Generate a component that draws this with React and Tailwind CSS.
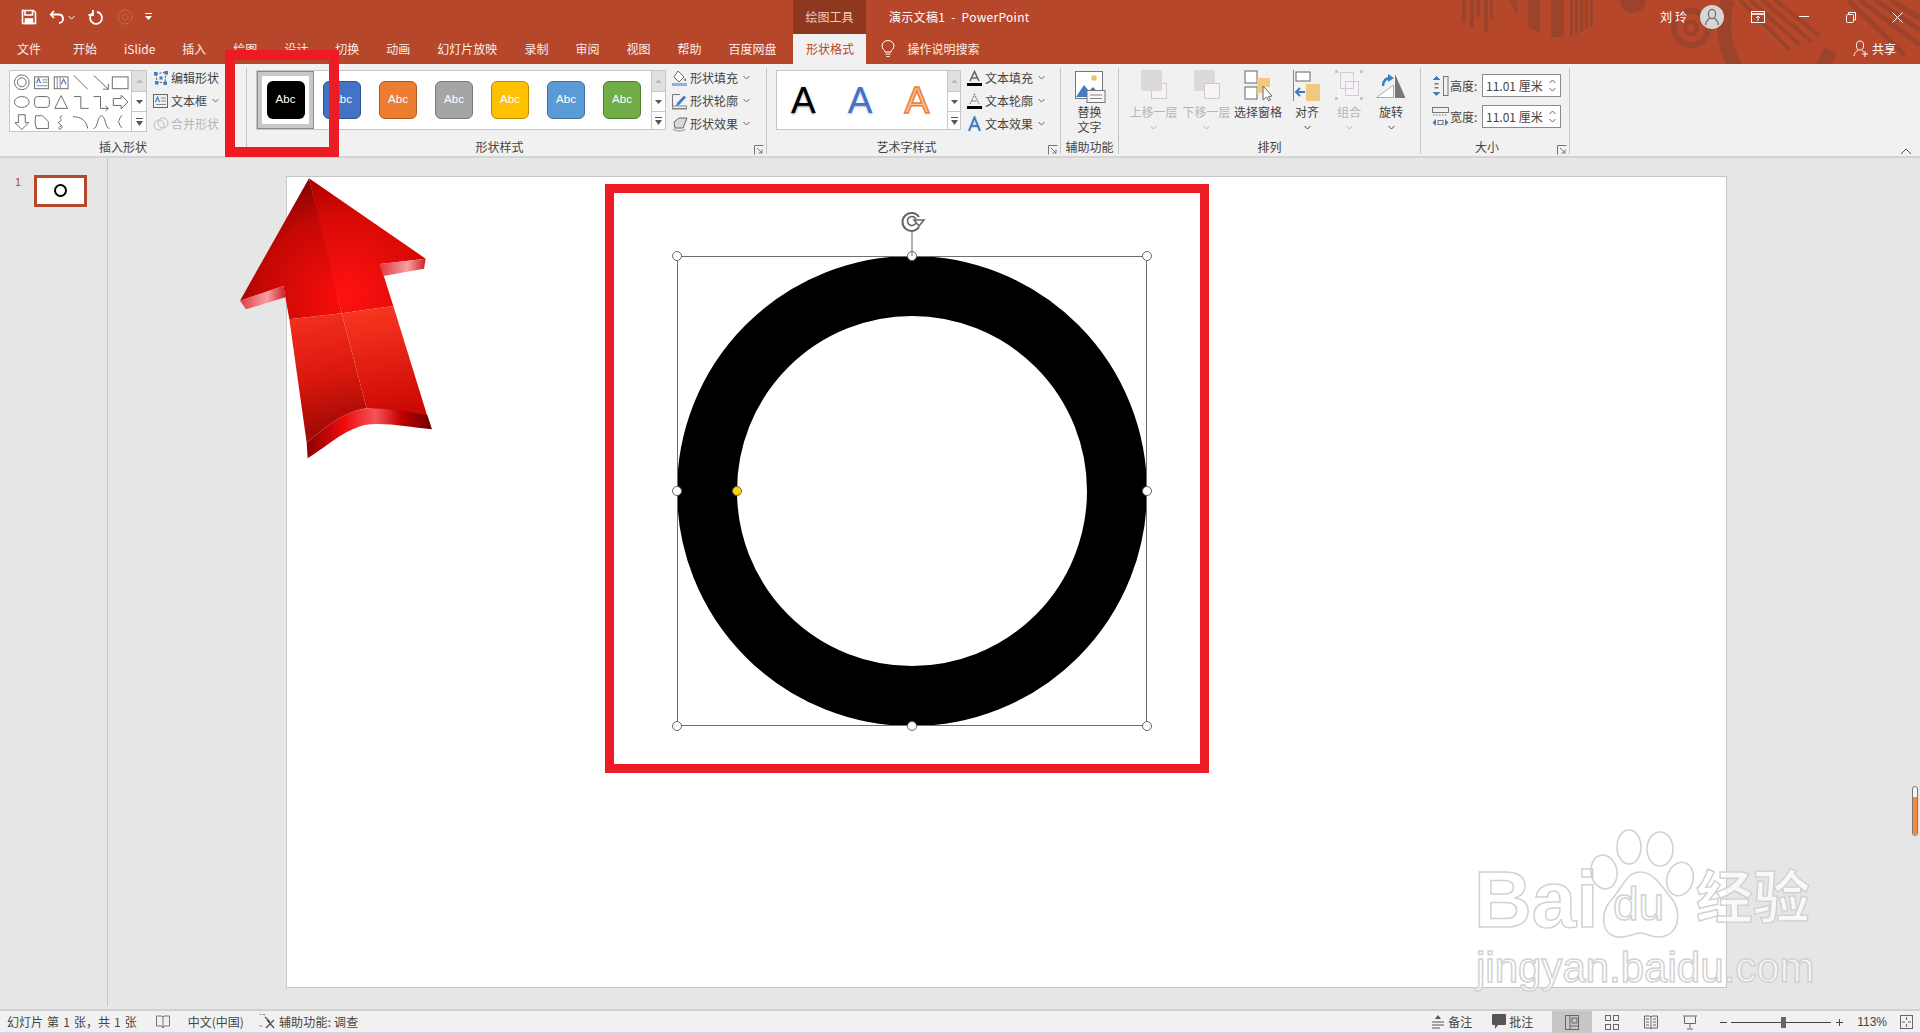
import React from "react";

const cjk = "font-['Noto_Sans_CJK_SC','Noto_Sans',sans-serif]";

const tabsLeft = [
  ["文件", "mr-[5px]"],
  ["开始", ""],
  ["iSlide", ""],
  ["插入", ""],
  ["绘图", ""],
  ["设计", ""],
  ["切换", ""],
  ["动画", ""],
  ["幻灯片放映", ""],
  ["录制", ""],
  ["审阅", ""],
  ["视图", ""],
  ["帮助", ""],
  ["百度网盘", ""],
];

const swatches = [
  ["bg-[#4472c4] border-[#2f528f]"],
  ["bg-[#ed7d31] border-[#ae5a21]"],
  ["bg-[#a5a5a5] border-[#787878]"],
  ["bg-[#ffc000] border-[#bc8c00]"],
  ["bg-[#5b9bd5] border-[#41719c]"],
  ["bg-[#70ad47] border-[#507e32]"],
];

const Chevron = ({ className = "" }) => (
  <svg width="7" height="5" viewBox="0 0 7 5" className={className}>
    <path d="M0.5 1 L3.5 4 L6.5 1" fill="none" stroke="currentColor" strokeWidth="1" />
  </svg>
);

const Launcher = ({ className = "" }) => (
  <svg width="10" height="10" viewBox="0 0 10 10" className={`absolute ${className}`}>
    <path d="M0.5 9.5 V0.5 H9.5 M3 3 L8 8 M8 4.5 V8 H4.5" fill="none" stroke="#777" strokeWidth="1" />
  </svg>
);

// up / down / more buttons on the right side of a gallery
const GalleryScroll = ({ width = "w-[15px]" }) => (
  <div className={`${width} h-full flex flex-col border-l border-[#c6c6c6] bg-white shrink-0`}>
    <div className="h-[21px] bg-[#e0e0e0] border-b border-[#c6c6c6] flex items-center justify-center">
      <svg width="7" height="4" viewBox="0 0 7 4"><path d="M3.5 0 L7 4 H0 Z" fill="#bdbdbd" /></svg>
    </div>
    <div className="h-[20px] border-b border-[#c6c6c6] flex items-center justify-center">
      <svg width="7" height="4" viewBox="0 0 7 4"><path d="M3.5 4 L7 0 H0 Z" fill="#555" /></svg>
    </div>
    <div className="flex-1 flex items-center justify-center">
      <svg width="7" height="8" viewBox="0 0 7 8"><path d="M0 0.5 H7" stroke="#555" /><path d="M3.5 8 L7 3 H0 Z" fill="#555" /></svg>
    </div>
  </div>
);

const ShapesIcons = () => (
  <svg width="123" height="60" viewBox="0 0 123 60" fill="none" stroke="#6b6b6b" strokeWidth="1">
    <circle cx="12" cy="11" r="7.5" />
    <circle cx="12" cy="11" r="4.5" />
    <rect x="25" y="5.5" width="14" height="12" />
    <path d="M33 8.5 H38 M33 11 H38 M27 14.5 H38" stroke="#888" />
    <path d="M27 12 L29 7 L31 12" stroke="#3f7cc4" strokeWidth="1.2" />
    <rect x="45" y="5.5" width="14" height="12" />
    <path d="M48 6 V17 M51 6 V17" stroke="#888" />
    <path d="M52 13 L54.5 8 L57 13" stroke="#3f7cc4" strokeWidth="1.2" />
    <path d="M65 4 L79 18" />
    <path d="M85 4 L100 18 M100 12.5 V18 H94.5" />
    <rect x="104" y="5.5" width="16" height="12" />
    <ellipse cx="12" cy="31" rx="7.5" ry="5.5" />
    <rect x="25" y="25.5" width="15" height="11" rx="3" />
    <path d="M52 24.5 L45.5 37.5 H58.5 Z" />
    <path d="M65 25.5 H72 V37.5 H80" />
    <path d="M85 25.5 H92 V37.5 H100 M97 35 L100 37.5 L97 40" />
    <path d="M105 27.5 H113 V24 L120 31 L113 38 V34.5 H105 Z" />
    <path d="M8.5 44 H15.5 V52 H19 L12 59 L5 52 H8.5 Z" />
    <path d="M26 45 H33 L39 51 V58 H27 L25.5 52 Z" />
    <path d="M53 45 C47 47 56 49 50 51 C46 53 56 54 52 58 C50 60 48 57 52 55" />
    <path d="M64 46 C72 46 78 50 79 58" />
    <path d="M85 58 C89 58 89 45 93 45 C97 45 97 58 101 58" />
    <path d="M114 45 C111 45 112 50 110 51 C112 52 111 57 114 57" />
  </svg>
);

const CmdRow = ({ icon, text, chevron, disabled, textW = "" }) => (
  <div className={`h-[23px] flex items-center ${disabled ? "text-[#b5b5b5]" : "text-[#444]"}`}>
    <span className="w-[18px] h-[16px] shrink-0">{icon}</span>
    <span className={`text-[12px] leading-none whitespace-nowrap ${textW}`}>{text}</span>
    {chevron && <Chevron className="ml-[5px] text-[#666]" />}
  </div>
);

const TallBtn = ({ w, icon, lines, chevron, disabled }) => (
  <div className={`${w} flex flex-col items-center shrink-0 ${disabled ? "text-[#b5b5b5]" : "text-[#444]"}`}>
    <div className="h-[33px] mt-[3px] flex items-start justify-center">{icon}</div>
    {lines.map((l) => (
      <div key={l} className="text-[12px] leading-[15px] whitespace-nowrap">{l}</div>
    ))}
    {chevron && <Chevron className="mt-[6px]" />}
  </div>
);

const Group = ({ width, label, children, labelClass = "" }) => (
  <div className={`${width} relative h-[86px] border-r border-[#c6c6c6] shrink-0 flex flex-col`}>
    <div className="h-[71px] flex items-start">{children}</div>
    <div className={`h-[15px] flex items-center justify-center text-[12px] leading-none text-[#444] ${labelClass}`}>{label}</div>
  </div>
);

const SizeRow = ({ icon, label }) => (
  <div className="flex items-center h-[23px]">
    <span className="w-[18px] h-[20px] shrink-0">{icon}</span>
    <span className="text-[12px] w-[32px] text-[#444] leading-none">{label}</span>
    <div className="w-[79px] h-[23px] border border-[#8a8a8a] bg-white flex items-center pl-[3px]">
      <span className="text-[12px] text-[#444] flex-1 leading-none whitespace-nowrap">11.01 厘米</span>
      <div className="flex flex-col gap-[3px] pr-[4px] text-[#666]">
        <Chevron className="rotate-180" />
        <Chevron />
      </div>
    </div>
  </div>
);

const Handle = ({ className, yellow }) => (
  <div className={`absolute w-[10px] h-[10px] rounded-full border-[1.5px] border-[#666] ${yellow ? "bg-[#ffd500]" : "bg-white"} ${className}`} />
);

const App = () => {
  return (
    <div className={`relative h-[1033px] w-[1920px] overflow-hidden flex flex-col bg-[#e6e6e6] ${cjk}`}>
      {/* Title bar + tabs */}
      <div className="relative h-[64px] bg-[#b7472a] text-white shrink-0">
        <svg width="460" height="64" viewBox="1460 0 460 64" className="absolute right-0 top-0" fill="#9b432b">
          <rect x="1462" y="0" width="4" height="22" />
          <rect x="1470" y="0" width="4" height="27" />
          <rect x="1476" y="0" width="4" height="17" />
          <rect x="1484" y="0" width="4" height="32" />
          <rect x="1490" y="0" width="3" height="20" />
          <path d="M1510 0 L1517 0 L1517 16 Z" />
          <path d="M1528 0 H1540 V33 L1528 27 Z" />
          <rect x="1551" y="0" width="13" height="37" />
          <rect x="1570" y="0" width="3" height="36" />
          <rect x="1575" y="0" width="3" height="34" />
          <rect x="1580" y="0" width="3" height="32" />
          <rect x="1585" y="0" width="3" height="29" />
          <rect x="1590" y="0" width="3" height="27" />
          <path d="M1620 0 A13 13 0 0 0 1646 0 Z" />
          <circle cx="1691" cy="28" r="17" fill="none" stroke="#9b432b" strokeWidth="6" />
          <circle cx="1691" cy="28" r="6" fill="none" stroke="#9b432b" strokeWidth="4" />
          <path d="M1728 0 A50 62 0 0 0 1830 50" fill="none" stroke="#9b432b" strokeWidth="14" />
          <path d="M1740 0 L1790 50 M1750 0 L1800 45 M1762 0 L1812 42 M1775 0 L1820 36" stroke="#9b432b" strokeWidth="4" />
          <path d="M1848 0 L1905 55 M1860 0 L1920 45 M1875 0 L1920 30 M1890 0 L1920 18" stroke="#9b432b" strokeWidth="5" />
        </svg>

        {/* Quick access + caption */}
        <div className="relative h-[34px] flex items-center">
          <svg width="16" height="16" viewBox="0 0 16 16" className="ml-[21px]" fill="none" stroke="white" strokeWidth="1.6">
            <path d="M1.5 1.5 H12.5 L14.5 3.5 V14.5 H1.5 Z" />
            <path d="M4 1.5 V6 H11.5 V1.5" />
            <rect x="4.5" y="10" width="7" height="4.5" fill="white" />
          </svg>
          <svg width="16" height="16" viewBox="0 0 16 16" className="ml-[12px]" fill="none" stroke="white" strokeWidth="1.8">
            <path d="M5 2 L1.8 5.5 L5 9" />
            <path d="M2 5.5 H9.5 C13 5.5 14 8 14 10 C14 12.5 12 14 10 14" />
          </svg>
          <Chevron className="ml-[3px] text-white" />
          <svg width="16" height="17" viewBox="0 0 16 17" className="ml-[13px]" fill="none" stroke="white" strokeWidth="1.8">
            <path d="M9 3 A6 6 0 1 1 4 4.5" />
            <path d="M5 1 V6 H0.5" />
          </svg>
          <svg width="16" height="16" viewBox="0 0 16 16" className="ml-[13px] opacity-30" fill="none" stroke="white" strokeWidth="1" strokeDasharray="1.5 1">
            <circle cx="8" cy="8" r="7" />
            <circle cx="8" cy="8" r="3" />
          </svg>
          <svg width="7" height="8" viewBox="0 0 7 8" className="ml-[12px]" fill="white">
            <rect x="0" y="0" width="7" height="1" />
            <path d="M0 3 H7 L3.5 7 Z" />
          </svg>

          <div className="absolute left-[793px] top-0 w-[73px] h-[34px] bg-[#8f3820] flex items-center justify-center text-[12px] text-[#f3c9bb]">绘图工具</div>
          <div className="absolute left-[889px] top-0 h-[34px] flex items-center text-[12px] tracking-[0.3px] whitespace-pre">演示文稿1  -  PowerPoint</div>

          <div className="ml-auto flex items-center h-[34px]">
            <span className="text-[12px] tracking-[3px] mr-[10px]">刘玲</span>
            <div className="w-[24px] h-[24px] rounded-full bg-[#d6d6d6] flex items-center justify-center">
              <svg width="16" height="18" viewBox="0 0 16 18" fill="none" stroke="#666" strokeWidth="1.2">
                <ellipse cx="8" cy="6" rx="3.6" ry="4.6" />
                <path d="M1.5 17 C2 12 5 11 6 10 M14.5 17 C14 12 11 11 10 10" />
              </svg>
            </div>
            <svg width="14" height="12" viewBox="0 0 14 12" className="ml-[27px]" fill="none" stroke="white" strokeWidth="1">
              <rect x="0.5" y="0.5" width="13" height="11" />
              <path d="M0.5 3 H13.5" strokeWidth="1.6" />
              <path d="M7 10 V5 M5 7 L7 5 L9 7" />
            </svg>
            <svg width="10" height="2" viewBox="0 0 10 2" className="ml-[34px]"><rect width="10" height="1" fill="white" /></svg>
            <svg width="10" height="11" viewBox="0 0 10 11" className="ml-[37px]" fill="none" stroke="white" strokeWidth="1">
              <rect x="0.5" y="2.5" width="7" height="8" rx="1" />
              <path d="M2.5 2 V0.5 H9.5 V8 H8" />
            </svg>
            <svg width="11" height="11" viewBox="0 0 11 11" className="ml-[36px] mr-[17px]" fill="none" stroke="white" strokeWidth="1">
              <path d="M0.5 0.5 L10.5 10.5 M10.5 0.5 L0.5 10.5" />
            </svg>
          </div>
        </div>

        {/* Tabs */}
        <div className="relative h-[30px] flex items-center pl-[17px] gap-[27px] text-[12px] text-[#fbeee9]">
          {tabsLeft.map(([t, extra]) => (
            <span key={t} className={`leading-none whitespace-nowrap ${extra}`}>{t}</span>
          ))}
          <div className="-ml-[10px] w-[73px] h-[30px] bg-[#f1f1f1] text-[#b7472a] flex items-center justify-center shrink-0">形状格式</div>
          <div className="-ml-[12px] flex items-center gap-[12px]">
            <svg width="14" height="18" viewBox="0 0 14 18" fill="none" stroke="white" strokeWidth="1">
              <path d="M4 12 C3.5 9.5 1 9 1 6 A6 5.5 0 0 1 13 6 C13 9 10.5 9.5 10 12 Z" />
              <path d="M4.5 14 H9.5 M5.5 16.5 H8.5" />
            </svg>
            <span className="whitespace-nowrap">操作说明搜索</span>
          </div>
          <div className="absolute right-[24px] top-0 h-[30px] flex items-center gap-[1px] text-white">
            <svg width="16" height="18" viewBox="0 0 16 18" fill="none" stroke="white" strokeWidth="1">
              <ellipse cx="7" cy="5.5" rx="3.6" ry="4.5" />
              <path d="M1 16 C1.5 12 4 11 5.5 10 M9 10.5 C10 11 10.5 11.5 11 12 M12 11 V17 M9 14 H15" />
            </svg>
            <span className="ml-[2px] text-[12px]">共享</span>
          </div>
        </div>
      </div>

      {/* Ribbon */}
      <div className="relative h-[94px] bg-[#f1f1f1] border-b-2 border-[#d4d4d4] shrink-0 pt-[4px] flex items-start text-[#444]">
        {/* 插入形状 */}
        <Group width="w-[247px]" label="插入形状">
          <div className="ml-[9px] mt-[2px] w-[138px] h-[62px] border border-[#c6c6c6] bg-white flex">
            <ShapesIcons />
            <GalleryScroll />
          </div>
          <div className="ml-[6px] -mt-[2px]">
            <CmdRow
              text="编辑形状"
              icon={
                <svg width="16" height="16" viewBox="0 0 16 16" fill="none">
                  <path d="M3 4 L13 2 L12 13 L4 12 Z" stroke="#555" strokeDasharray="2 1.5" />
                  <g fill="#3f7cc4">
                    <rect x="1" y="2" width="3.5" height="3.5" />
                    <rect x="11.5" y="1" width="3.5" height="3.5" />
                    <rect x="10.5" y="11.5" width="3.5" height="3.5" />
                    <rect x="2" y="11" width="3.5" height="3.5" />
                    <rect x="6.5" y="6.5" width="3" height="3" />
                  </g>
                </svg>
              }
            />
            <CmdRow
              text="文本框"
              chevron
              icon={
                <svg width="16" height="16" viewBox="0 0 16 16" fill="none">
                  <rect x="0.5" y="1.5" width="14" height="13" stroke="#666" />
                  <path d="M2.5 9 L4.5 4 L6.5 9" stroke="#3f7cc4" strokeWidth="1.2" />
                  <path d="M8 5 H13 M8 8 H13 M3 11.5 H13" stroke="#888" />
                </svg>
              }
            />
            <CmdRow
              text="合并形状"
              disabled
              icon={
                <svg width="16" height="16" viewBox="0 0 16 16" fill="none" stroke="#bcbcbc">
                  <circle cx="6" cy="9" r="5" />
                  <circle cx="10" cy="7" r="5" />
                </svg>
              }
            />
          </div>
        </Group>

        {/* 形状样式 */}
        <Group width="w-[520px]" label="形状样式" labelClass="pr-[14px]">
          <div className="ml-[9px] mt-[2px] w-[410px] h-[60px] border border-[#c6c6c6] bg-white flex items-center">
            <div className="ml-[1px] w-[55px] h-[56px] border-[4px] border-[#c8c8c8] outline outline-1 outline-[#8a8a8a] flex items-center justify-center shrink-0">
              <div className="w-[38px] h-[38px] rounded-[6px] bg-black flex items-center justify-center text-white text-[11.5px] font-['Liberation_Sans',sans-serif]">Abc</div>
            </div>
            <div className="flex gap-[18px] ml-[10px] flex-1 overflow-hidden">
              {swatches.map(([c], i) => (
                <div key={i} className={`w-[38px] h-[38px] shrink-0 rounded-[6px] border ${c} flex items-center justify-center text-white text-[11.5px] font-['Liberation_Sans',sans-serif]`}>Abc</div>
              ))}
            </div>
            <GalleryScroll width="w-[14px]" />
          </div>
          <div className="ml-[6px] -mt-[2px]">
            <CmdRow
              text="形状填充"
              chevron
              icon={
                <svg width="16" height="17" viewBox="0 0 16 17" fill="none">
                  <path d="M6 1 L12 7 L7 12 L2 7 Z" stroke="#666" fill="white" />
                  <path d="M13 8 C14.5 10 14.5 11 13 11 C12 11 12 10 13 8 Z" fill="#666" />
                  <rect x="0" y="13" width="15" height="3" fill="#8fb1dc" />
                </svg>
              }
            />
            <CmdRow
              text="形状轮廓"
              chevron
              icon={
                <svg width="16" height="17" viewBox="0 0 16 17" fill="none">
                  <path d="M0.5 14 V1.5 H8 M0.5 15.5 H15" stroke="#777" />
                  <path d="M5 10 L12 2.5 L14 4.5 L7 12 L4 13 Z" fill="#3f7cc4" />
                  <rect x="0.5" y="13" width="14" height="3" stroke="#888" />
                </svg>
              }
            />
            <CmdRow
              text="形状效果"
              chevron
              icon={
                <svg width="16" height="16" viewBox="0 0 16 16">
                  <path d="M2 6 L7 2 H15 L11 12 H3 Z" fill="#d9d9d9" stroke="#666" />
                  <path d="M1 13 C4 15.5 11 15.5 13 13" stroke="#bbb" strokeWidth="2" fill="none" />
                </svg>
              }
            />
          </div>
          <Launcher className="right-[2px] bottom-[-1px]" />
        </Group>

        {/* 艺术字样式 */}
        <Group width="w-[294px]" label="艺术字样式" labelClass="pr-[14px]">
          <div className="ml-[9px] mt-[2px] w-[185px] h-[60px] border border-[#c6c6c6] bg-white flex items-center">
            <div className="flex-1 flex text-[37px] leading-none font-['Liberation_Sans',sans-serif] pl-[14px] gap-[32px]">
              <span className="text-black [text-shadow:0_1px_2px_#888]">A</span>
              <span className="text-[#4472c4] [text-shadow:0_1px_2px_#a9b9d8]">A</span>
              <span className="text-[#f7c4a2] [-webkit-text-stroke:1.5px_#ed7d31]">A</span>
            </div>
            <GalleryScroll width="w-[13px]" />
          </div>
          <div className="ml-[6px] -mt-[2px]">
            <CmdRow
              text="文本填充"
              chevron
              icon={
                <svg width="16" height="17" viewBox="0 0 16 17" fill="none">
                  <path d="M3 11 L7.5 1.5 L12 11 M4.8 8 H10.2" stroke="#666" strokeWidth="1.6" />
                  <rect x="0" y="13" width="15" height="3" fill="black" />
                </svg>
              }
            />
            <CmdRow
              text="文本轮廓"
              chevron
              icon={
                <svg width="16" height="17" viewBox="0 0 16 17" fill="none">
                  <path d="M3 11 L7.5 1.5 L12 11 M4.8 8 H10.2" stroke="#888" strokeDasharray="1.5 1" strokeWidth="1.4" />
                  <rect x="0" y="13" width="15" height="3" fill="black" />
                </svg>
              }
            />
            <CmdRow
              text="文本效果"
              chevron
              icon={
                <svg width="16" height="16" viewBox="0 0 16 16" fill="none">
                  <path d="M2 15 L7.5 1.5 L13 15 M4.2 10 H10.8" stroke="#9fc2e6" strokeWidth="3" />
                  <path d="M2 15 L7.5 1.5 L13 15 M4.2 10 H10.8" stroke="#2f6db5" strokeWidth="1.3" />
                </svg>
              }
            />
          </div>
          <Launcher className="right-[2px] bottom-[-1px]" />
        </Group>

        {/* 辅助功能 */}
        <Group width="w-[58px]" label="辅助功能">
          <TallBtn
            w="w-full"
            lines={["替换", "文字"]}
            icon={
              <svg width="32" height="32" viewBox="0 0 32 32" fill="none">
                <rect x="1.5" y="0.5" width="27" height="27" fill="white" stroke="#777" />
                <circle cx="20" cy="7" r="2.8" fill="#f0c060" />
                <path d="M2 26 L10 14 L15 20 L19 16 L28 26 Z" fill="#3f7cc4" />
                <rect x="13" y="19.5" width="18" height="12" fill="#f5f5f5" stroke="#777" />
                <path d="M16 24 H28 M16 27.5 H28" stroke="#888" />
              </svg>
            }
          />
        </Group>

        {/* 排列 */}
        <Group width="w-[302px]" label="排列">
          <div className="ml-[8px] flex">
            <TallBtn
              w="w-[53px]"
              disabled
              chevron
              lines={["上移一层"]}
              icon={
                <svg width="26" height="29" viewBox="0 0 26 29" className="-mt-px">
                  <rect x="10.5" y="13.5" width="15" height="15" fill="#f6f2f6" stroke="#cfcbd0" />
                  <rect x="0" y="0" width="21" height="21" fill="#dcd9dd" />
                </svg>
              }
            />
            <TallBtn
              w="w-[53px]"
              disabled
              chevron
              lines={["下移一层"]}
              icon={
                <svg width="26" height="29" viewBox="0 0 26 29" className="-mt-px">
                  <rect x="0" y="0" width="21" height="21" fill="#dcd9dd" />
                  <rect x="10.5" y="13.5" width="15" height="15" fill="#f6f2f6" stroke="#cfcbd0" />
                </svg>
              }
            />
            <TallBtn
              w="w-[50px]"
              lines={["选择窗格"]}
              icon={
                <svg width="28" height="32" viewBox="0 0 28 32" fill="none" className="-mt-[2px]">
                  <rect x="1" y="2" width="12" height="12" stroke="#666" fill="white" />
                  <rect x="1" y="18" width="12" height="12" stroke="#666" fill="white" />
                  <path d="M13 9 H26 V18 H19 V24 H13 Z" fill="#f0c97e" />
                  <path d="M19 17 V31 L22.5 28 L25 32 L26.5 31 L24.5 27.5 L28 27 Z" fill="white" stroke="#666" />
                </svg>
              }
            />
            <TallBtn
              w="w-[48px]"
              chevron
              lines={["对齐"]}
              icon={
                <svg width="28" height="32" viewBox="0 0 28 32" fill="none" className="-mt-[2px]">
                  <path d="M0.5 1 V32" stroke="#888" />
                  <rect x="3" y="3" width="14" height="9" stroke="#666" fill="white" />
                  <rect x="13" y="15" width="14" height="17" fill="#f0c97e" />
                  <path d="M3 23 H12 M7 19 L3 23 L7 27" stroke="#3f7cc4" strokeWidth="2" />
                </svg>
              }
            />
            <TallBtn
              w="w-[36px]"
              disabled
              chevron
              lines={["组合"]}
              icon={
                <svg width="28" height="32" viewBox="0 0 28 32" fill="none" className="-mt-[2px]">
                  <rect x="3" y="3" width="22" height="26" fill="#f6f2f6" />
                  <rect x="5.5" y="3.5" width="13" height="16" stroke="#cfcbd0" />
                  <rect x="10.5" y="12.5" width="13" height="14" stroke="#cfcbd0" />
                  <g fill="#c8c8c8">
                    <rect x="0" y="1" width="3" height="3" />
                    <rect x="25" y="1" width="3" height="3" />
                    <rect x="0" y="28" width="3" height="3" />
                    <rect x="25" y="28" width="3" height="3" />
                  </g>
                </svg>
              }
            />
            <TallBtn
              w="w-[48px]"
              chevron
              lines={["旋转"]}
              icon={
                <svg width="30" height="26" viewBox="0 0 30 26" fill="none" className="mt-[2px]">
                  <path d="M0.5 24.5 L17.5 12 V24.5 Z" fill="white" stroke="#aaa" />
                  <path d="M19 1 L29.5 25 H19 Z" fill="#777" />
                  <path d="M7 13 C7 7 11 5 15 5" stroke="#3f7cc4" strokeWidth="2.4" />
                  <path d="M12 1 L18 5 L12 9 Z" fill="#3f7cc4" />
                </svg>
              }
            />
          </div>
        </Group>

        {/* 大小 */}
        <Group width="w-[149px]" label="大小" labelClass="pr-[16px]">
          <div className="ml-[11px] mt-[6px] flex flex-col gap-[8px]">
            <SizeRow
              label="高度:"
              icon={
                <svg width="17" height="20" viewBox="0 0 17 20" fill="none">
                  <rect x="11.5" y="0.5" width="4.5" height="19" stroke="#777" />
                  <path d="M1 4 L4.5 0.5 L8 4 M1 16 L4.5 19.5 L8 16" fill="#3f7cc4" stroke="#3f7cc4" />
                  <path d="M2.5 7 H6.5 V8.5 H2.5 Z M2.5 11 H6.5 V12.5 H2.5 Z" fill="#777" />
                </svg>
              }
            />
            <SizeRow
              label="宽度:"
              icon={
                <svg width="17" height="20" viewBox="0 0 17 20" fill="none">
                  <rect x="0.5" y="0.5" width="16" height="5" stroke="#777" />
                  <path d="M1 8 H16" stroke="#777" strokeDasharray="1.5 1.5" />
                  <path d="M4 12 L0.5 15.5 L4 19 Z M13 12 L16.5 15.5 L13 19 Z" fill="#3f7cc4" />
                  <rect x="6" y="13.5" width="5" height="4" stroke="#777" />
                </svg>
              }
            />
          </div>
          <Launcher className="right-[2px] bottom-[-1px]" />
        </Group>

        <svg width="12" height="7" viewBox="0 0 12 7" className="absolute left-[1900px] top-[84px]">
          <path d="M1 6 L6 1 L11 6" fill="none" stroke="#555" />
        </svg>
      </div>

      {/* Body */}
      <div className="relative flex-1 flex min-h-0">
        <div className="w-[108px] border-r border-[#c6c6c6] shrink-0 flex items-start pt-[17px] pl-[15px] gap-[13px] mb-[3px]">
          <span className="text-[11px] leading-none text-[#b7472a] mt-[2px] font-['Liberation_Sans',sans-serif]">1</span>
          <div className="w-[53px] h-[32px] border-[3px] border-[#b7472a] bg-white flex items-center justify-center">
            <div className="w-[13px] h-[13px] rounded-full border-2 border-black -mt-[2px]" />
          </div>
        </div>

        {/* Canvas */}
        <div className="flex-1 pl-[178px] pt-[18px]">
          <div className="relative w-[1441px] h-[812px] bg-white border border-[#c6c6c6]">
            {/* red marker */}
            <div className="absolute left-[318px] top-[7px] w-[604px] h-[589px] border-[9px] border-[#ed1c24]" />
            {/* shape + selection */}
            <div className="absolute left-[390px] top-[79px] w-[470px] h-[470px] rounded-full border-[60px] border-black" />
            <div className="absolute left-[390px] top-[79px] w-[470px] h-[470px] border border-[#6e6e6e]" />
            <Handle className="left-[385px] top-[74px]" />
            <Handle className="left-[620px] top-[74px]" />
            <Handle className="left-[855px] top-[74px]" />
            <Handle className="left-[385px] top-[309px]" />
            <Handle className="left-[855px] top-[309px]" />
            <Handle className="left-[385px] top-[544px]" />
            <Handle className="left-[620px] top-[544px]" />
            <Handle className="left-[855px] top-[544px]" />
            <Handle yellow className="left-[445px] top-[309px]" />
            <svg width="28" height="46" viewBox="0 0 28 46" className="absolute left-[611px] top-[33px]" fill="none" stroke="#666">
              <path d="M14 22 V46" strokeWidth="1" />
              <path d="M21 17 A9 9 0 1 1 21 7" strokeWidth="2" />
              <path d="M18 13 A4.5 4.5 0 1 1 18 9" strokeWidth="1.6" />
              <path d="M16 10 L26 10 L21 16 Z" fill="white" strokeWidth="1.5" />
            </svg>
          </div>
        </div>

        {/* zoom-ish scrollbar thumb */}
        <div className="absolute left-[1912px] top-[628px] w-[6px] h-[50px] rounded-[3px] border border-[#777] bg-[#f5f5f5] overflow-hidden flex flex-col justify-end">
          <div className="h-[38px] bg-[#f58a3c]" />
        </div>
      </div>

      {/* Status bar */}
      <div className="h-[24px] bg-[#f1f1f1] border-t-2 border-[#d0d0d0] shrink-0 flex items-center text-[12px] text-[#444] shadow-[inset_0_-1px_0_#cfdbea]">
        <span className="ml-[7px] whitespace-pre leading-none [word-spacing:1.4px]">幻灯片 第 1 张，共 1 张</span>
        <svg width="14" height="14" viewBox="0 0 14 14" className="ml-[19px]" fill="none" stroke="#777">
          <path d="M0.5 1 H6 L7 2 L8 1 H13.5 V11 H8 L7 13 L6 11 H0.5 Z M7 2 V13" />
        </svg>
        <span className="ml-[18px] leading-none">中文(中国)</span>
        <svg width="17" height="16" viewBox="0 0 17 16" className="ml-[15px]" fill="none" stroke="#555">
          <path d="M6 1 A6 6 0 1 0 3 12" strokeDasharray="2 1" />
          <path d="M6 3 L11 8 M7 14 L15 6 M8 6 L15 14" strokeWidth="1.4" />
        </svg>
        <span className="ml-[3px] leading-none tracking-[0.2px]">辅助功能: 调查</span>

        <div className="ml-auto flex items-center h-full">
          <svg width="12" height="14" viewBox="0 0 12 14" fill="none" stroke="#555">
            <path d="M0 7 H12 M0 10 H12 M0 13 H8" />
            <path d="M6 0 L9 4 H3 Z" fill="#555" stroke="none" />
          </svg>
          <span className="ml-[4px] leading-none">备注</span>
          <svg width="14" height="16" viewBox="0 0 14 16" className="ml-[20px]" fill="#555">
            <path d="M1 0 H13 A1 1 0 0 1 14 1 V10 A1 1 0 0 1 13 11 H6 L3 15 V11 H1 A1 1 0 0 1 0 10 V1 A1 1 0 0 1 1 0 Z" />
          </svg>
          <span className="ml-[3px] leading-none">批注</span>
          <div className="ml-[19px] w-[40px] h-full bg-[#c6c6c6] flex items-center justify-center">
            <svg width="14" height="15" viewBox="0 0 14 15" fill="none" stroke="#666">
              <rect x="0.5" y="0.5" width="13" height="14" />
              <path d="M5 1 V14 M5 11 H13 M7 3 H12 V8 H7 Z" />
            </svg>
          </div>
          <svg width="14" height="15" viewBox="0 0 14 15" className="ml-[13px]" fill="none" stroke="#666">
            <rect x="0.5" y="0.5" width="5" height="5" />
            <rect x="8.5" y="0.5" width="5" height="5" />
            <rect x="0.5" y="9.5" width="5" height="5" />
            <rect x="8.5" y="9.5" width="5" height="5" />
          </svg>
          <svg width="14" height="15" viewBox="0 0 14 15" className="ml-[25px]" fill="none" stroke="#666">
            <path d="M0.5 1 H6 L7 2 L8 1 H13.5 V13 H8 L7 14 L6 13 H0.5 Z M7 2 V14 M2 4 H5 M2 7 H5 M2 10 H5 M9 4 H12 M9 7 H12 M9 10 H12" />
          </svg>
          <svg width="14" height="15" viewBox="0 0 14 15" className="ml-[25px]" fill="none" stroke="#666">
            <path d="M0 1 H14 M1.5 1.5 V8.5 H12.5 V1.5 M7 8.5 V13 M4 14 H10" />
          </svg>
          <span className="ml-[23px] w-[7px] h-px bg-[#444]" />
          <div className="ml-[4px] relative w-[100px] h-px bg-[#444]">
            <div className="absolute left-[50px] -top-[5px] w-[5px] h-[11px] bg-[#666]" />
          </div>
          <span className="ml-[5px] w-[7px] h-[7px] relative">
            <span className="absolute left-0 top-[3px] w-[7px] h-px bg-[#444]" />
            <span className="absolute left-[3px] top-0 w-px h-[7px] bg-[#444]" />
          </span>
          <span className="ml-[14px] leading-none font-['Liberation_Sans',sans-serif]">113%</span>
          <svg width="13" height="14" viewBox="0 0 13 14" className="ml-[13px] mr-[7px]" fill="none" stroke="#666">
            <rect x="0.5" y="0.5" width="12" height="13" />
            <path d="M6.5 2 V5 M6.5 9 V12 M2 7 H5 M8 7 H11" />
          </svg>
        </div>
      </div>

      {/* Red marker over the first style */}
      <div className="absolute left-[225px] top-[50px] w-[114px] h-[107px] border-[10px] border-[#ed1c24]" />

      {/* Big red arrow */}
      <svg width="240" height="310" viewBox="0 0 720 930" className="absolute left-[220px] top-[160px]">
        <defs>
          <radialGradient id="arrowLeft" gradientUnits="userSpaceOnUse" cx="360" cy="410" r="400">
            <stop offset="0" stopColor="#f80e0c" />
            <stop offset="0.6" stopColor="#c40804" />
            <stop offset="1" stopColor="#6e0000" />
          </radialGradient>
          <radialGradient id="arrowRight" gradientUnits="userSpaceOnUse" cx="380" cy="400" r="380">
            <stop offset="0" stopColor="#ff1210" />
            <stop offset="0.6" stopColor="#d80a06" />
            <stop offset="1" stopColor="#a60000" />
          </radialGradient>
          <linearGradient id="shaftLeft" gradientUnits="userSpaceOnUse" x1="280" y1="470" x2="340" y2="800">
            <stop offset="0" stopColor="#f22e1c" />
            <stop offset="0.55" stopColor="#d9170d" />
            <stop offset="1" stopColor="#a50b06" />
          </linearGradient>
          <linearGradient id="shaftRight" gradientUnits="userSpaceOnUse" x1="440" y1="450" x2="500" y2="760">
            <stop offset="0" stopColor="#f73620" />
            <stop offset="1" stopColor="#cc0a04" />
          </linearGradient>
          <linearGradient id="arrowBase" x1="0" y1="0" x2="1" y2="0">
            <stop offset="0" stopColor="#8b0000" />
            <stop offset="0.3" stopColor="#ee0c0c" />
            <stop offset="0.55" stopColor="#f5545c" />
            <stop offset="0.75" stopColor="#c30000" />
            <stop offset="1" stopColor="#6c0000" />
          </linearGradient>
          <linearGradient id="arrowLip" x1="0" y1="0" x2="1" y2="0">
            <stop offset="0" stopColor="#e03a40" />
            <stop offset="0.6" stopColor="#f6a0a0" />
            <stop offset="1" stopColor="#cc2028" />
          </linearGradient>
        </defs>
        <path d="M267 55 L60 422 L190 378 L208 478 L365 460 L320 260 Z" fill="url(#arrowLeft)" />
        <path d="M267 55 L617 296 L480 312 L520 438 L365 460 Z" fill="url(#arrowRight)" />
        <path d="M208 478 L365 460 L440 745 C370 755 320 800 260 848 Z" fill="url(#shaftLeft)" />
        <path d="M365 460 L520 438 L622 768 L440 745 Z" fill="url(#shaftRight)" />
        <path d="M260 848 C320 800 370 755 440 745 C500 745 570 755 622 765 L636 808 C560 800 490 785 435 795 C370 810 320 860 263 895 Z" fill="url(#arrowBase)" />
        <path d="M60 422 L190 378 L196 412 L78 448 Z" fill="url(#arrowLip)" />
        <path d="M480 312 L617 296 L612 326 L490 348 Z" fill="url(#arrowLip)" />
      </svg>

      {/* Baidu watermark */}
      <div className="absolute left-[1474px] top-[835px] w-[350px] h-[165px] text-white/70 [-webkit-text-stroke:1.5px_#d2d2d2] font-['Liberation_Sans',sans-serif] pointer-events-none">
        <span className="absolute left-0 top-[25px] text-[80px] leading-none font-bold">Bai</span>
        <span className="absolute left-[139px] top-[46px] text-[46px] leading-none">du</span>
        <span className={`absolute left-[222px] top-[30px] text-[57px] leading-none font-bold ${cjk}`}>经验</span>
        <span className="absolute left-[2px] top-[112px] text-[42px] leading-none">jingyan.baidu.com</span>
        <svg width="110" height="110" viewBox="0 0 110 110" className="absolute left-[122px] top-0 overflow-visible" fill="none" stroke="#d2d2d2" strokeWidth="1.6">
          <ellipse cx="33" cy="12" rx="12" ry="17" />
          <ellipse cx="64" cy="14" rx="13" ry="17" />
          <ellipse cx="8" cy="37" rx="13" ry="17" transform="rotate(-10 8 37)" />
          <ellipse cx="84" cy="44" rx="13" ry="17" transform="rotate(15 84 44)" />
          <path d="M44 37 C58 37 66 52 76 64 C86 76 84 102 62 102 C54 102 50 98 44 98 C38 98 32 103 22 102 C4 100 4 76 16 64 C26 54 30 37 44 37 Z" />
        </svg>
      </div>
    </div>
  );
};

export default App;
